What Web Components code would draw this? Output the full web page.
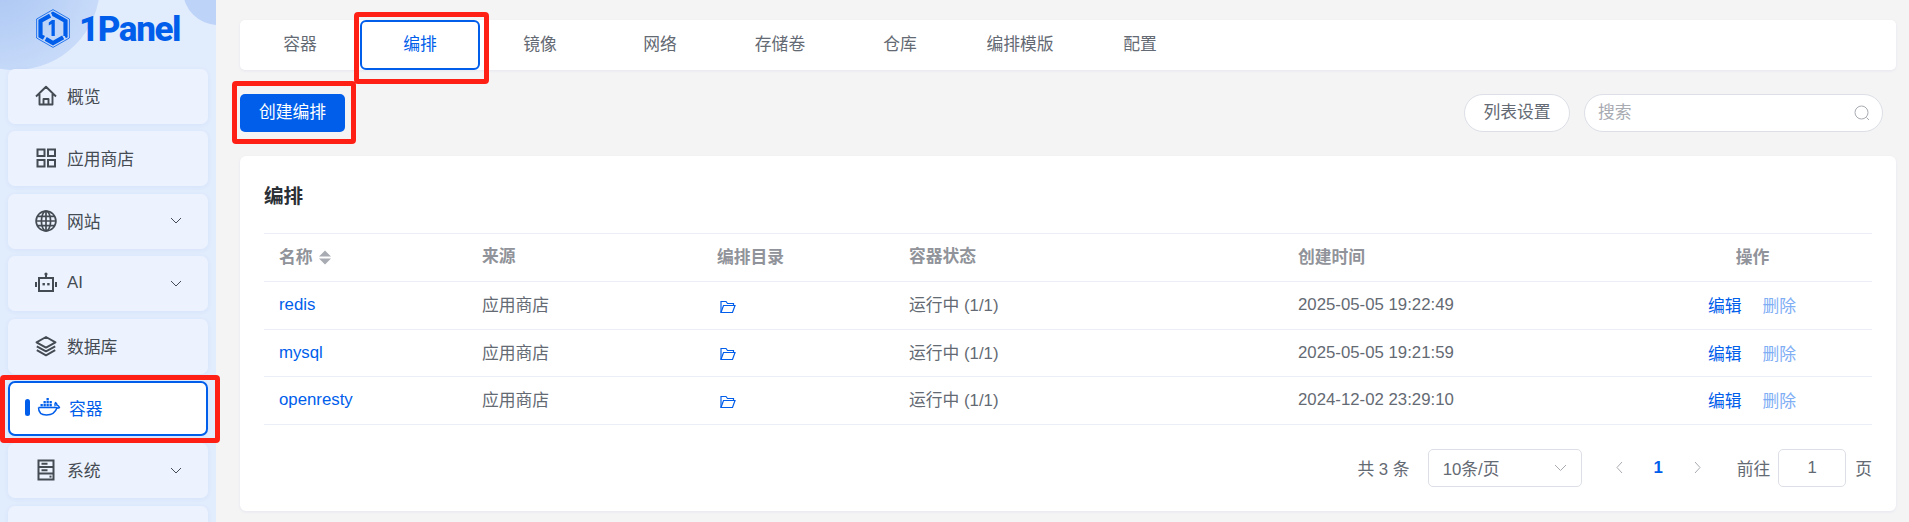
<!DOCTYPE html>
<html lang="zh">
<head>
<meta charset="utf-8">
<title>1Panel</title>
<style>
html, body { margin: 0; height: 522px; overflow: hidden; background: #f4f4f5; }
body { font: 16.8px "Liberation Sans", "Noto Sans CJK SC", sans-serif; color: #646a73; }
</style>
</head>
<body>
<app-shell>
  <side-nav slot="side">
    <nav-item icon="home">概览</nav-item>
    <nav-item icon="apps">应用商店</nav-item>
    <nav-item icon="globe" more>网站</nav-item>
    <nav-item icon="robot" more>AI</nav-item>
    <nav-item icon="layers">数据库</nav-item>
    <nav-item icon="docker" active>容器</nav-item>
    <nav-item icon="server" more>系统</nav-item>
    <nav-item></nav-item>
  </side-nav>
  <tab-bar>
    <tab-item>容器</tab-item>
    <tab-item active>编排</tab-item>
    <tab-item>镜像</tab-item>
    <tab-item>网络</tab-item>
    <tab-item>存储卷</tab-item>
    <tab-item>仓库</tab-item>
    <tab-item>编排模版</tab-item>
    <tab-item>配置</tab-item>
  </tab-bar>
  <tool-bar></tool-bar>
  <compose-card>
    <compose-row head name="名称" source="来源" dir="编排目录" state="容器状态" time="创建时间"></compose-row>
    <compose-row name="redis" source="应用商店" state="运行中 (1/1)" time="2025-05-05 19:22:49"></compose-row>
    <compose-row name="mysql" source="应用商店" state="运行中 (1/1)" time="2025-05-05 19:21:59"></compose-row>
    <compose-row name="openresty" source="应用商店" state="运行中 (1/1)" time="2024-12-02 23:29:10"></compose-row>
    <page-bar slot="foot"></page-bar>
  </compose-card>
  <mark-box slot="marks" style="--x:354px;--y:12px;--w:135px;--h:72px"></mark-box>
  <mark-box slot="marks" style="--x:232px;--y:81px;--w:124px;--h:63px"></mark-box>
  <mark-box slot="marks" style="--x:0px;--y:375px;--w:220px;--h:68px"></mark-box>
</app-shell>

<script>
const ICONS = {
    home: '<path d="M1 11.500 11 1.800l10 9.700M4.500 9v10.500h13V9M8.500 19.500v-5.500h5v5.500" fill="none" stroke="currentColor" stroke-width="1.900" stroke-linejoin="round"/>',
    apps: '<g fill="none" stroke="currentColor" stroke-width="2"><rect x="2.500" y="2.500" width="7" height="6.500"/><rect x="13" y="2.500" width="7" height="6.500"/><rect x="2.500" y="13" width="7" height="6.500"/><rect x="13" y="13" width="7" height="6.500"/></g>',
    globe: '<g fill="none" stroke="currentColor" stroke-width="1.700"><circle cx="11" cy="11" r="9.900"/><ellipse cx="11" cy="11" rx="4.600" ry="9.900"/><path d="M11 1.200v19.600M1.200 11h19.600M2.500 6.300h17M2.500 15.700h17"/></g>',
    robot: '<g fill="none" stroke="currentColor" stroke-width="2"><rect x="4" y="6" width="14" height="13"/><path d="M11 2.500V6M1 10v5M21 10v5"/></g><circle cx="11" cy="2" r="1.600" fill="currentColor"/><rect x="7.500" y="11" width="2.400" height="2.400" fill="currentColor"/><rect x="12.200" y="11" width="2.400" height="2.400" fill="currentColor"/>',
    layers: '<g fill="none" stroke="currentColor" stroke-width="1.900" stroke-linejoin="round"><path d="M11 2 20.500 7.300 11 12.600 1.500 7.300Z"/><path d="M1.800 11.300 11 16.400l9.200-5.100M1.800 15.200 11 20.300l9.200-5.100"/></g>',
    server: '<g fill="none" stroke="currentColor" stroke-width="2"><rect x="3.500" y="1.500" width="15" height="19"/><path d="M3.500 8h15M3.500 14.400h15M6.500 4.800h6M6.500 11.200h6"/></g><rect x="14.500" y="16.600" width="2" height="2" fill="currentColor"/>',
    docker: '<g fill="none" stroke="currentColor" stroke-width="1.500"><path d="M1.500 10.500h17.600c1 .6 2.400.5 3.300 0-.4-1.300-1.200-2-2.300-2.200-.2-1.200-.8-2-1.600-2.600-.7 1-.9 2.300-.3 3.400"/><path d="M1.500 10.500c0 5 3.300 7.500 8 7.500 5.500 0 9-2.700 10.500-7.200"/></g><g fill="currentColor"><rect x="3.500" y="7" width="2.300" height="2.400"/><rect x="6.500" y="7" width="2.300" height="2.400"/><rect x="9.500" y="7" width="2.300" height="2.400"/><rect x="12.500" y="7" width="2.300" height="2.400"/><rect x="6.500" y="4" width="2.300" height="2.400"/><rect x="9.500" y="4" width="2.300" height="2.400"/><rect x="12.500" y="4" width="2.300" height="2.400"/><rect x="9.500" y="1" width="2.300" height="2.400"/></g>'
};

class AppShell extends HTMLElement {
    constructor() {
        super();
        this.attachShadow({mode: 'open'});
        this.shadowRoot.innerHTML = `
            <style>
                :host { display: flex; position: relative; height: 522px; overflow: hidden; }
                .main { flex: 1; min-width: 0; padding: 20px 13px 0 24px; }
            </style>
            <slot name="side"></slot>
            <div class="main"><slot></slot></div>
            <slot name="marks"></slot>`;
    }
}

class SideNav extends HTMLElement {
    constructor() {
        super();
        this.attachShadow({mode: 'open'});
        this.shadowRoot.innerHTML = `
            <style>
                :host { display: block; position: relative; flex: none; width: 216px; height: 522px; overflow: hidden; background: #e1ecfd; }
                .blob { position: absolute; border-radius: 50%; }
                .a { left: -70px; top: -100px; width: 170px; height: 170px; background: radial-gradient(circle at 40% 45%, #a8c5f3, #d3e2fb); }
                .b { left: 183px; top: -45px; width: 70px; height: 70px; background: #bed3f8; }
                .logo { position: relative; display: flex; align-items: center; gap: 9px; height: 57px; padding: 0 0 0 36px; color: #005eeb; font: 800 35px Roboto, sans-serif; letter-spacing: -1.4px; }
                .logo svg { flex: none; }
                .logo span { padding-top: 2px; }
                .list { position: relative; display: flex; flex-direction: column; gap: 7.4px; padding: 12px 8px 0; }
            </style>
            <div class="blob a"></div><div class="blob b"></div>
            <div class="logo">
                <svg width="34" height="39" viewBox="0 0 34 39">
                    <path d="M17 .6 33.400 10v19L17 38.400 .6 29V10Z" fill="none" stroke="#005eeb" stroke-width=".8"/>
                    <path d="M17 5 29.500 12v15L17 34 4.500 27V12Z" fill="none" stroke="#005eeb" stroke-width="4.200" stroke-dasharray="30 2 20 2"/>
                    <path d="M18.800 11v16h-3.300V15l-2.700 1.500v-3L16 11Z" fill="#005eeb"/>
                </svg>
                <span>1Panel</span>
            </div>
            <div class="list"><slot></slot></div>`;
    }
}

class NavItem extends HTMLElement {
    constructor() {
        super();
        this.attachShadow({mode: 'open'});
    }

    connectedCallback() {
        const icon = this.getAttribute('icon');
        const active = this.hasAttribute('active');
        const glyph = icon ? `<svg class="icon" width="${active ? 24 : 22}" height="22" viewBox="0 0 ${active ? 24 : 22} 22">${ICONS[icon]}</svg>` : '';
        const arrow = this.hasAttribute('more')
            ? '<svg class="arrow" width="12" height="7" viewBox="0 0 12 7"><path d="M1 1l5 5 5-5" fill="none" stroke="currentColor" stroke-width="1"/></svg>'
            : '';
        this.shadowRoot.innerHTML = `
            <style>
                :host { display: flex; align-items: center; flex: none; box-sizing: border-box; height: 55px; padding: 0 0 1px 27px; border-radius: 7px; background: #edf3fe; color: #454b53; box-shadow: 0 1px 4px rgba(90, 130, 220, .08); }
                :host([active]) { background: #fff; color: #005eeb; border: 2px solid #005eeb; padding-left: 15px; }
                .bar { width: 5px; height: 17px; margin-right: 7px; border-radius: 3px; background: #005eeb; }
                .icon { flex: none; margin-right: 10px; }
                :host([active]) .icon { margin-right: 8px; }
                .arrow { margin-left: auto; margin-right: 26px; }
            </style>
            ${active ? '<span class="bar"></span>' : ''}${glyph}<slot></slot>${arrow}`;
    }
}

class TabBar extends HTMLElement {
    constructor() {
        super();
        this.attachShadow({mode: 'open'});
        this.shadowRoot.innerHTML = `
            <style>
                :host { display: flex; height: 50px; border-radius: 5px; background: #fff; box-shadow: 0 1px 3px rgba(60, 80, 160, .08); }
            </style>
            <slot></slot>`;
    }
}

class TabItem extends HTMLElement {
    constructor() {
        super();
        this.attachShadow({mode: 'open'});
        this.shadowRoot.innerHTML = `
            <style>
                :host { display: flex; align-items: center; justify-content: center; box-sizing: border-box; width: 120px; height: 50px; padding-bottom: 4px; color: #646a73; }
                :host([active]) { border: 2px solid #005eeb; border-radius: 6px; color: #005eeb; }
            </style>
            <slot></slot>`;
    }
}

class ToolBar extends HTMLElement {
    constructor() {
        super();
        this.attachShadow({mode: 'open'});
        this.shadowRoot.innerHTML = `
            <style>
                :host { display: flex; align-items: center; height: 38px; margin: 24px 0; }
                div { padding-bottom: 4px; }
                .create { display: flex; align-items: center; justify-content: center; box-sizing: border-box; width: 105px; height: 38px; border-radius: 5px; background: #005eeb; color: #fff; }
                .set { display: flex; align-items: center; justify-content: center; box-sizing: border-box; width: 106px; height: 38px; margin-left: auto; border: 1px solid #dcdfe6; border-radius: 19px; background: #fff; color: #646a73; }
                .search { display: flex; align-items: center; justify-content: space-between; box-sizing: border-box; width: 299px; height: 38px; margin: 0 13px 0 14px; padding: 0 12px 4px 13px; border: 1px solid #dcdfe6; border-radius: 19px; background: #fff; color: #a8abb2; }
                .search svg { position: relative; top: 2px; }
            </style>
            <div class="create">创建编排</div>
            <div class="set">列表设置</div>
            <div class="search">
                <span>搜索</span>
                <svg width="16" height="16" viewBox="0 0 16 16" fill="none" stroke="currentColor" stroke-width="1"><circle cx="7.500" cy="7.500" r="6.500"/><path d="M12.500 12.500l2.500 2.500"/></svg>
            </div>`;
    }
}

class ComposeCard extends HTMLElement {
    constructor() {
        super();
        this.attachShadow({mode: 'open'});
        this.shadowRoot.innerHTML = `
            <style>
                :host { display: block; box-sizing: border-box; height: 355px; padding: 0 24px; border-radius: 6px; background: #fff; box-shadow: 0 1px 3px rgba(60, 80, 160, .08); }
                h2 { display: flex; align-items: center; box-sizing: border-box; height: 78px; margin: 0; font-size: 19.6px; font-weight: 700; color: #2b2f36; border-bottom: 1px solid #ebeef5; }
            </style>
            <h2>编排</h2>
            <slot></slot>
            <slot name="foot"></slot>`;
    }
}

class ComposeRow extends HTMLElement {
    constructor() {
        super();
        this.attachShadow({mode: 'open'});
    }

    connectedCallback() {
        const get = (key) => this.getAttribute(key) || '';
        const head = this.hasAttribute('head');
        const sort = '<svg class="sort" width="12" height="15" viewBox="0 0 12 15"><path d="M6 .5l6 6H0ZM6 14.500 0 8.500h12Z" fill="#a8abb2"/></svg>';
        const folder = '<svg width="16" height="14" viewBox="0 0 16 14" fill="none" stroke="#005eeb" stroke-width="1.200"><path d="M1 12.500V1.500h5l1.500 2H13.500v2"/><path d="M1 12.500h11.500L15 5.500H3.500L1 12.500Z"/></svg>';
        this.shadowRoot.innerHTML = `
            <style>
                :host { display: grid; grid-template-columns: 203px 235px 192px 389px 350px 239px; align-items: center; box-sizing: border-box; height: 47.6px; border-bottom: 1px solid #ebeef5; }
                :host([head]) { height: 48px; padding-bottom: 3px; font-weight: 700; color: #909399; }
                div { padding-left: 15px; }
                .up { padding-bottom: 2px; }
                .link { color: #005eeb; }
                .sort { margin-left: 6px; vertical-align: -2px; }
                .dir svg { display: block; margin: 3px 0 0 3px; }
                .ops { display: flex; gap: 21px; padding-left: 75px; }
                .ops span:last-child { color: #80aef5; }
                .ops span:first-child { color: #005eeb; }
                :host([head]) .ops { justify-content: center; padding-left: 0; }
            </style>
            <div class="${head ? '' : 'link'}">${get('name')}${head ? sort : ''}</div>
            <div class="up">${get('source')}</div>
            <div class="dir">${head ? get('dir') : folder}</div>
            <div class="up">${get('state')}</div>
            <div>${get('time')}</div>
            <div class="ops">${head ? '操作' : '<span>编辑</span><span>删除</span>'}</div>`;
    }
}

class PageBar extends HTMLElement {
    constructor() {
        super();
        this.attachShadow({mode: 'open'});
        this.shadowRoot.innerHTML = `
            <style>
                :host { display: flex; align-items: center; justify-content: flex-end; height: 38px; margin-top: 24px; color: #646a73; }
                .box { display: flex; align-items: center; box-sizing: border-box; height: 38px; border: 1px solid #dcdfe6; border-radius: 5px; }
                .size { justify-content: space-between; width: 154px; margin-left: 18px; padding: 0 14px; }
                .go { justify-content: center; width: 68px; margin: 0 9px 0 8px; }
                .num { width: 69px; text-align: center; color: #005eeb; font-weight: 700; }
                .pages { display: flex; align-items: center; margin: 0 35px 0 33px; color: #a8abb2; }
            </style>
            <span>共 3 条</span>
            <div class="box size">10条/页<svg width="13" height="8" viewBox="0 0 13 8"><path d="M1 1l5.500 5.500L12 1" fill="none" stroke="#a8abb2"/></svg></div>
            <div class="pages">
                <svg width="9" height="13" viewBox="0 0 9 13"><path d="M7 1 2 6.500 7 12" fill="none" stroke="currentColor"/></svg>
                <span class="num">1</span>
                <svg width="9" height="13" viewBox="0 0 9 13"><path d="M2 1l5 5.500L2 12" fill="none" stroke="currentColor"/></svg>
            </div>
            <span>前往</span>
            <div class="box go">1</div>
            <span>页</span>`;
    }
}

class MarkBox extends HTMLElement {
    constructor() {
        super();
        this.attachShadow({mode: 'open'});
        this.shadowRoot.innerHTML = `
            <style>
                :host { position: absolute; left: var(--x); top: var(--y); width: var(--w); height: var(--h); box-sizing: border-box; border: 5px solid #ff2015; border-radius: 4px; pointer-events: none; }
            </style>`;
    }
}

customElements.define('app-shell', AppShell);
customElements.define('side-nav', SideNav);
customElements.define('nav-item', NavItem);
customElements.define('tab-bar', TabBar);
customElements.define('tab-item', TabItem);
customElements.define('tool-bar', ToolBar);
customElements.define('compose-card', ComposeCard);
customElements.define('compose-row', ComposeRow);
customElements.define('page-bar', PageBar);
customElements.define('mark-box', MarkBox);
</script>
</body>
</html>
